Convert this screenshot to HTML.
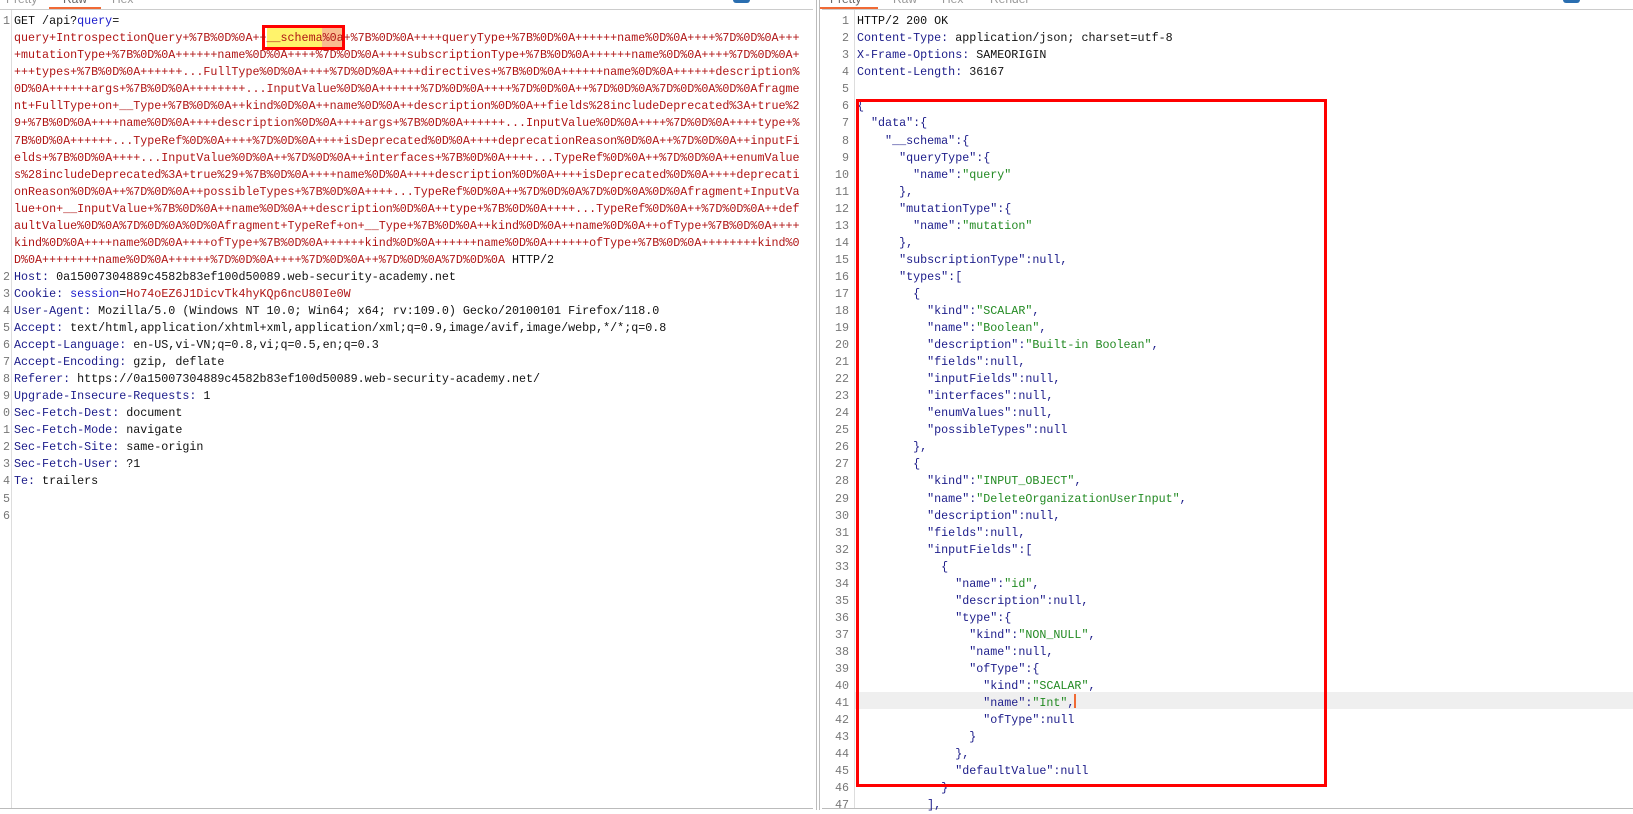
<!DOCTYPE html>
<html><head><meta charset="utf-8"><style>
*{margin:0;padding:0;box-sizing:border-box}
body{width:1633px;height:810px;background:#fff;position:relative;overflow:hidden;font-family:"Liberation Mono",monospace;font-size:11.7px;color:#111}
.abs{position:absolute}
.code div{height:17.05px;line-height:17.05px;white-space:pre}
.r{color:#b01515}.n{color:#1c1c8a}.b{color:#1a1acc}.g{color:#228a22}
.tab{position:absolute;top:-8px;font-family:"Liberation Sans",sans-serif;font-size:12px;color:#999}
</style></head><body>
<!-- top bar -->
<div class="abs" style="left:0;top:9px;width:813px;height:1px;background:#ccc"></div>
<div class="abs" style="left:822px;top:9px;width:811px;height:1px;background:#ccc"></div>
<div class="tab" style="left:6px">Pretty</div>
<div class="tab" style="left:63px;color:#666">Raw</div>
<div class="tab" style="left:112px">Hex</div>
<div class="abs" style="left:49px;top:7px;width:52px;height:2px;background:#f06a35"></div>
<div class="tab" style="left:830px;color:#666">Pretty</div>
<div class="tab" style="left:893px">Raw</div>
<div class="tab" style="left:942px">Hex</div>
<div class="tab" style="left:990px">Render</div>
<div class="abs" style="left:819px;top:7px;width:59px;height:2px;background:#f06a35"></div>
<div class="abs" style="left:733px;top:0;width:17px;height:3px;background:#2a6eb0;border-radius:0 0 5px 5px"></div>
<div class="abs" style="left:1563px;top:0;width:17px;height:3px;background:#2a6eb0;border-radius:0 0 5px 5px"></div>
<!-- dividers -->
<div class="abs" style="left:816px;top:0;width:1px;height:810px;background:#bbb"></div>
<div class="abs" style="left:819px;top:0;width:1px;height:810px;background:#bbb"></div>
<div class="abs" style="left:0;top:808px;width:813px;height:1px;background:#bbb"></div>
<div class="abs" style="left:822px;top:808px;width:811px;height:1px;background:#bbb"></div>
<div class="abs" style="left:11px;top:10px;width:1px;height:798px;background:#ddd"></div>
<div class="abs" style="left:854px;top:10px;width:1px;height:798px;background:#ddd"></div>
<!-- left gutter -->
<div class="abs code" style="left:0;top:13.2px;width:10px;overflow:hidden;color:#777;text-align:right">
<div>1</div><div></div><div></div><div></div><div></div><div></div><div></div><div></div><div></div><div></div><div></div><div></div><div></div><div></div><div></div>
<div>2</div><div>3</div><div>4</div><div>5</div><div>6</div><div>7</div><div>8</div><div>9</div><div>0</div><div>1</div><div>2</div><div>3</div><div>4</div><div>5</div><div>6</div>
</div>
<!-- left highlight -->
<div class="abs" style="left:267px;top:28px;width:55px;height:19px;background:#fff36b"></div>
<div class="abs" style="left:322px;top:28px;width:21px;height:19px;background:#f9bd90"></div>
<div class="abs" style="left:262px;top:25px;width:83px;height:25px;border:3px solid #f00"></div>
<div class="abs code" style="left:14px;top:13.2px">
<div>GET /api?<span class="b">query</span>=</div>
<div class="r">query+IntrospectionQuery+%7B%0D%0A++__schema%0a+%7B%0D%0A++++queryType+%7B%0D%0A++++++name%0D%0A++++%7D%0D%0A+++</div>
<div class="r">+mutationType+%7B%0D%0A++++++name%0D%0A++++%7D%0D%0A++++subscriptionType+%7B%0D%0A++++++name%0D%0A++++%7D%0D%0A+</div>
<div class="r">+++types+%7B%0D%0A++++++...FullType%0D%0A++++%7D%0D%0A++++directives+%7B%0D%0A++++++name%0D%0A++++++description%</div>
<div class="r">0D%0A++++++args+%7B%0D%0A++++++++...InputValue%0D%0A++++++%7D%0D%0A++++%7D%0D%0A++%7D%0D%0A%7D%0D%0A%0D%0Afragme</div>
<div class="r">nt+FullType+on+__Type+%7B%0D%0A++kind%0D%0A++name%0D%0A++description%0D%0A++fields%28includeDeprecated%3A+true%2</div>
<div class="r">9+%7B%0D%0A++++name%0D%0A++++description%0D%0A++++args+%7B%0D%0A++++++...InputValue%0D%0A++++%7D%0D%0A++++type+%</div>
<div class="r">7B%0D%0A++++++...TypeRef%0D%0A++++%7D%0D%0A++++isDeprecated%0D%0A++++deprecationReason%0D%0A++%7D%0D%0A++inputFi</div>
<div class="r">elds+%7B%0D%0A++++...InputValue%0D%0A++%7D%0D%0A++interfaces+%7B%0D%0A++++...TypeRef%0D%0A++%7D%0D%0A++enumValue</div>
<div class="r">s%28includeDeprecated%3A+true%29+%7B%0D%0A++++name%0D%0A++++description%0D%0A++++isDeprecated%0D%0A++++deprecati</div>
<div class="r">onReason%0D%0A++%7D%0D%0A++possibleTypes+%7B%0D%0A++++...TypeRef%0D%0A++%7D%0D%0A%7D%0D%0A%0D%0Afragment+InputVa</div>
<div class="r">lue+on+__InputValue+%7B%0D%0A++name%0D%0A++description%0D%0A++type+%7B%0D%0A++++...TypeRef%0D%0A++%7D%0D%0A++def</div>
<div class="r">aultValue%0D%0A%7D%0D%0A%0D%0Afragment+TypeRef+on+__Type+%7B%0D%0A++kind%0D%0A++name%0D%0A++ofType+%7B%0D%0A++++</div>
<div class="r">kind%0D%0A++++name%0D%0A++++ofType+%7B%0D%0A++++++kind%0D%0A++++++name%0D%0A++++++ofType+%7B%0D%0A++++++++kind%0</div>
<div><span class="r">D%0A++++++++name%0D%0A++++++%7D%0D%0A++++%7D%0D%0A++%7D%0D%0A%7D%0D%0A</span> HTTP/2</div>
<div><span class="n">Host:</span> 0a15007304889c4582b83ef100d50089.web-security-academy.net</div>
<div><span class="n">Cookie:</span> <span class="b">session</span>=<span class="r">Ho74oEZ6J1DicvTk4hyKQp6ncU80Ie0W</span></div>
<div><span class="n">User-Agent:</span> Mozilla/5.0 (Windows NT 10.0; Win64; x64; rv:109.0) Gecko/20100101 Firefox/118.0</div>
<div><span class="n">Accept:</span> text/html,application/xhtml+xml,application/xml;q=0.9,image/avif,image/webp,*/*;q=0.8</div>
<div><span class="n">Accept-Language:</span> en-US,vi-VN;q=0.8,vi;q=0.5,en;q=0.3</div>
<div><span class="n">Accept-Encoding:</span> gzip, deflate</div>
<div><span class="n">Referer:</span> https://0a15007304889c4582b83ef100d50089.web-security-academy.net/</div>
<div><span class="n">Upgrade-Insecure-Requests:</span> 1</div>
<div><span class="n">Sec-Fetch-Dest:</span> document</div>
<div><span class="n">Sec-Fetch-Mode:</span> navigate</div>
<div><span class="n">Sec-Fetch-Site:</span> same-origin</div>
<div><span class="n">Sec-Fetch-User:</span> ?1</div>
<div><span class="n">Te:</span> trailers</div>
<div></div><div></div>
</div>
<!-- right -->
<div class="abs" style="left:855px;top:692px;width:778px;height:17px;background:#efefef"></div>
<div class="abs" style="left:1074px;top:694px;width:2px;height:14px;background:#f06a35"></div>
<div class="abs code" style="left:820px;top:13.2px;width:29px;color:#777;text-align:right">
<div>1</div><div>2</div><div>3</div><div>4</div><div>5</div><div>6</div><div>7</div><div>8</div><div>9</div><div>10</div><div>11</div><div>12</div><div>13</div><div>14</div><div>15</div><div>16</div><div>17</div><div>18</div><div>19</div><div>20</div><div>21</div><div>22</div><div>23</div><div>24</div><div>25</div><div>26</div><div>27</div><div>28</div><div>29</div><div>30</div><div>31</div><div>32</div><div>33</div><div>34</div><div>35</div><div>36</div><div>37</div><div>38</div><div>39</div><div>40</div><div>41</div><div>42</div><div>43</div><div>44</div><div>45</div><div>46</div><div>47</div>
</div>
<div class="abs code n" style="left:857px;top:13.2px">
<div style="color:#111">HTTP/2 200 OK</div>
<div>Content-Type: <span style="color:#111">application/json; charset=utf-8</span></div>
<div>X-Frame-Options: <span style="color:#111">SAMEORIGIN</span></div>
<div>Content-Length: <span style="color:#111">36167</span></div>
<div></div>
<div>{</div>
<div>  "data":{</div>
<div>    "__schema":{</div>
<div>      "queryType":{</div>
<div>        "name":<span class="g">"query"</span></div>
<div>      },</div>
<div>      "mutationType":{</div>
<div>        "name":<span class="g">"mutation"</span></div>
<div>      },</div>
<div>      "subscriptionType":null,</div>
<div>      "types":[</div>
<div>        {</div>
<div>          "kind":<span class="g">"SCALAR"</span>,</div>
<div>          "name":<span class="g">"Boolean"</span>,</div>
<div>          "description":<span class="g">"Built-in Boolean"</span>,</div>
<div>          "fields":null,</div>
<div>          "inputFields":null,</div>
<div>          "interfaces":null,</div>
<div>          "enumValues":null,</div>
<div>          "possibleTypes":null</div>
<div>        },</div>
<div>        {</div>
<div>          "kind":<span class="g">"INPUT_OBJECT"</span>,</div>
<div>          "name":<span class="g">"DeleteOrganizationUserInput"</span>,</div>
<div>          "description":null,</div>
<div>          "fields":null,</div>
<div>          "inputFields":[</div>
<div>            {</div>
<div>              "name":<span class="g">"id"</span>,</div>
<div>              "description":null,</div>
<div>              "type":{</div>
<div>                "kind":<span class="g">"NON_NULL"</span>,</div>
<div>                "name":null,</div>
<div>                "ofType":{</div>
<div>                  "kind":<span class="g">"SCALAR"</span>,</div>
<div>                  "name":<span class="g">"Int"</span>,</div>
<div>                  "ofType":null</div>
<div>                }</div>
<div>              },</div>
<div>              "defaultValue":null</div>
<div>            }</div>
<div>          ],</div>
</div>
<div class="abs" style="left:856px;top:99px;width:471px;height:688px;border:3px solid #f00"></div>
</body></html>
